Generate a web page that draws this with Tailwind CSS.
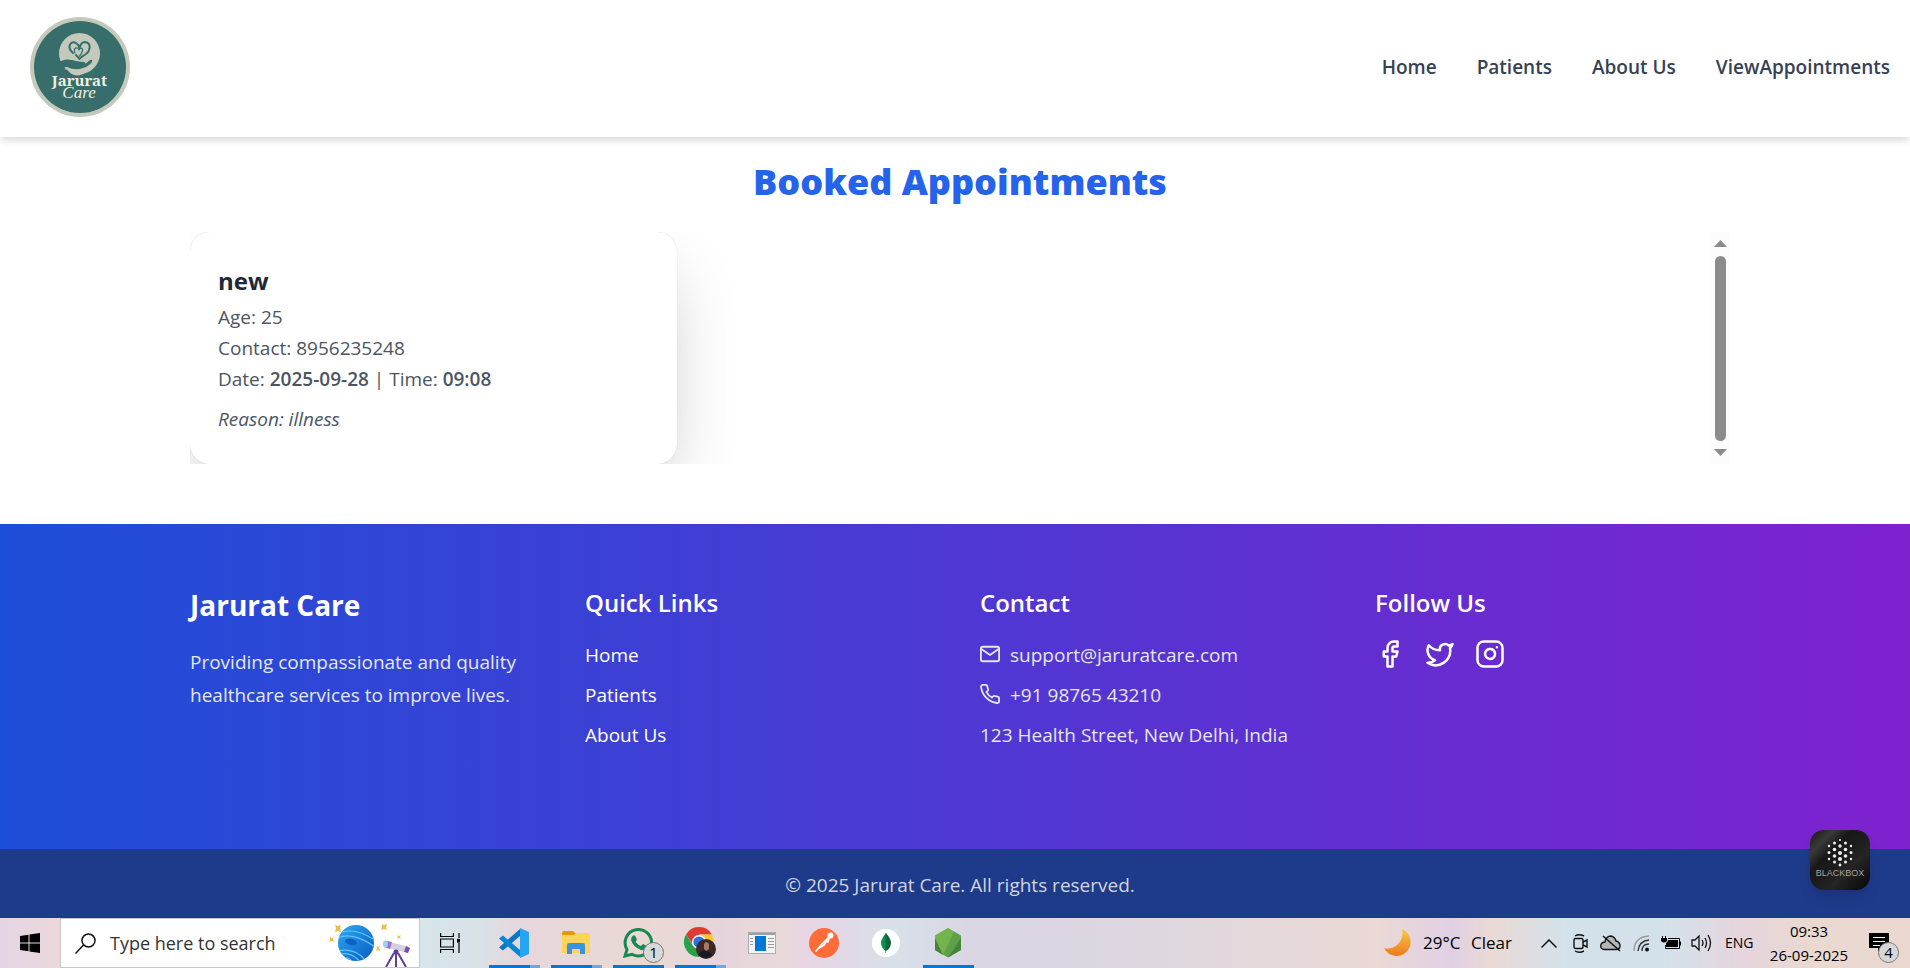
<!DOCTYPE html>
<html lang="en">
<head>
<meta charset="utf-8">
<title>Jarurat Care</title>
<script src="https://cdn.jsdelivr.net/npm/@tailwindcss/browser@4"></script>
</head>
<body class="min-h-screen flex flex-col bg-white font-['Segoe_UI','Open_Sans',sans-serif] text-[19px] leading-[30px] overflow-x-hidden">

<header class="relative z-10 h-[137px] shrink-0 flex items-center justify-between pl-[30px] pr-5 pb-[3px] bg-white shadow-[0_4px_8px_-1px_rgba(0,0,0,0.16)]">
  <a href="#" aria-label="Jarurat Care">
    <svg class="size-[100px]" viewBox="0 0 100 100">
      <circle cx="50" cy="50" r="50" fill="#c3cabb"/>
      <circle cx="50" cy="50" r="46" fill="#376e6b"/>
      <circle cx="49.500" cy="36.500" r="20.500" fill="#c3cabb"/>
      <g fill="none" stroke="#376e6b" stroke-linecap="round" stroke-linejoin="round">
        <path stroke-width="2" d="M43 36C36 30 41 23 46 26Q49 28 49.500 31Q51 25 55 25C62 26 60 34 56 37Q51 40 49.500 42Q48 40 46 38"/>
        <path stroke-width="1.200" d="M45 36C43 31 47 29 49 33Q51 30 52.500 32Q53 35 49.500 39"/>
      </g>
      <path fill="#376e6b" d="M28 46Q34 41 42 43Q49 45 54 45Q57 46 54 48L60 43Q63 42 62 45Q58 50 53 51Q45 54 37 50Q33 50 28 54Z"/>
      <path fill="#c3cabb" d="M34 52Q39 50 43 54Q49 57 58 53Q52 60 44 58Q39 56 38 53Z"/>
      <text x="49.500" y="69" text-anchor="middle" font-family="'Noto Serif','Liberation Serif',serif" font-weight="700" font-size="15" fill="#f1efdf">Jarurat</text>
      <text x="49" y="81" text-anchor="middle" font-family="'Liberation Serif',serif" font-style="italic" font-size="17" fill="#f1efdf">Care</text>
    </svg>
  </a>
  <nav class="flex gap-10 font-semibold text-gray-700">
    <a href="#">Home</a><a href="#">Patients</a><a href="#">About Us</a><a href="#">ViewAppointments</a>
  </nav>
</header>

<main class="shrink-0 pl-[10px] pb-[60px]">
  <div class="max-w-[1540px] mx-auto">
    <h1 class="pt-5 mb-[25px] text-center text-[36px] leading-[50px] font-extrabold text-[#2563eb]">Booked Appointments</h1>
    <section class="h-[232px] flex justify-between overflow-hidden" aria-label="Appointments">
      <article class="w-[487px] h-full rounded-[20px] bg-white px-7 pt-[31px] leading-[31px] text-[#4b5563] shadow-[0_31px_70px_-15px_rgba(0,0,0,0.25),0_0_1px_rgba(0,0,0,0.2)]">
        <h2 class="mb-[4px] text-[24px] leading-[35px] font-bold text-[#1f2937]">new</h2>
        <p>Age: 25</p>
        <p>Contact: 8956235248</p>
        <p>Date: <span class="font-semibold">2025-09-28</span> | Time: <span class="font-semibold">09:08</span></p>
        <p class="mt-[9px] italic">Reason: illness</p>
      </article>
      <div class="w-[19px] flex flex-col items-center justify-between py-2 bg-[#fcfcfc]" aria-hidden="true">
        <svg class="w-[13px] h-[7px]" viewBox="0 0 13 7"><path fill="#8b8b8b" d="M6.500 0L13 7H0Z"/></svg>
        <div class="w-[11px] h-[185px] rounded-full bg-[#8b8b8b]"></div>
        <svg class="w-[13px] h-[7px]" viewBox="0 0 13 7"><path fill="#8b8b8b" d="M0 0H13L6.500 7Z"/></svg>
      </div>
    </section>
  </div>
</main>

<footer class="relative flex-1 flex flex-col bg-linear-to-r/srgb from-[#1d4ed8] to-[#7e22ce] text-white">
  <div class="flex-1 pl-[10px] pt-[60px]">
    <div class="max-w-[1540px] mx-auto grid grid-cols-4 gap-10">
      <div>
        <h2 class="mb-5 text-[28px] leading-[42px] font-bold">Jarurat Care</h2>
        <p class="leading-[33px] text-[#e5e7eb]">Providing compassionate and quality healthcare services to improve lives.</p>
      </div>
      <div>
        <h3 class="mb-[18px] text-[24px] leading-[38px] font-semibold">Quick Links</h3>
        <ul class="flex flex-col gap-[10px]">
          <li><a href="#">Home</a></li><li><a href="#">Patients</a></li><li><a href="#">About Us</a></li>
        </ul>
      </div>
      <div>
        <h3 class="mb-[18px] text-[24px] leading-[38px] font-semibold">Contact</h3>
        <ul class="flex flex-col gap-[10px] text-[#e5e7eb]">
          <li class="flex items-center gap-[10px]">
            <svg class="size-5 mb-[2px]" viewBox="1 1 22 22" fill="none" stroke="currentColor" stroke-width="2" stroke-linecap="round" stroke-linejoin="round"><rect x="2" y="4" width="20" height="16" rx="2"/><path d="M2.500 6.500l9.500 6.500 9.500-6.500"/></svg>
            <a href="#">support@jaruratcare.com</a></li>
          <li class="flex items-center gap-[10px]">
            <svg class="size-5 mb-[2px]" viewBox="1 1 22 22" fill="none" stroke="currentColor" stroke-width="2" stroke-linecap="round" stroke-linejoin="round"><path d="M22 16.920v3a2 2 0 0 1-2.180 2 19.790 19.790 0 0 1-8.630-3.070 19.500 19.500 0 0 1-6-6 19.790 19.790 0 0 1-3.070-8.670A2 2 0 0 1 4.110 2h3a2 2 0 0 1 2 1.720 12.840 12.840 0 0 0 .7 2.810 2 2 0 0 1-.45 2.110L8.090 9.910a16 16 0 0 0 6 6l1.270-1.270a2 2 0 0 1 2.110-.45 12.840 12.840 0 0 0 2.810.7A2 2 0 0 1 22 16.920z"/></svg>
            <a href="#">+91 98765 43210</a></li>
          <li>123 Health Street, New Delhi, India</li>
        </ul>
      </div>
      <div>
        <h3 class="mb-[17px] text-[24px] leading-[38px] font-semibold">Follow Us</h3>
        <div class="flex gap-5">
          <a href="#" aria-label="Facebook"><svg class="size-[30px]" viewBox="0 0 24 24" fill="none" stroke="currentColor" stroke-width="2" stroke-linecap="round" stroke-linejoin="round"><path d="M18 2h-3a5 5 0 0 0-5 5v3H7v4h3v8h4v-8h3l1-4h-4V7a1 1 0 0 1 1-1h3z"/></svg></a>
          <a href="#" aria-label="Twitter"><svg class="size-[30px]" viewBox="0 0 24 24" fill="none" stroke="currentColor" stroke-width="2" stroke-linecap="round" stroke-linejoin="round"><path d="M22 4s-.7 2.100-2 3.400c1.600 10-9.400 17.300-18 11.600 2.200.1 4.400-.6 6-2C3 15.500.5 9.600 3 5c2.200 2.600 5.600 4.100 9 4-.9-4.200 4-6.600 7-3.800 1.100 0 3-1.200 3-1.200z"/></svg></a>
          <a href="#" aria-label="Instagram"><svg class="size-[30px]" viewBox="0 0 24 24" fill="none" stroke="currentColor" stroke-width="2" stroke-linecap="round" stroke-linejoin="round"><rect x="2" y="2" width="20" height="20" rx="5"/><path d="M16 11.370A4 4 0 1 1 12.630 8 4 4 0 0 1 16 11.370zM17.500 6.500h.01"/></svg></a>
        </div>
      </div>
    </div>
  </div>
  <p class="h-[69px] pl-[10px] flex items-center justify-center pt-[2px] bg-[#1e3a8a] text-[#d1d5db]">© 2025 Jarurat Care. All rights reserved.</p>
  <button aria-label="Blackbox" class="absolute right-10 bottom-[28px] size-[60px] rounded-[14px] shadow-lg">
    <svg class="size-[60px]" viewBox="0 0 60 60">
      <defs><linearGradient id="bb" x1="0" y1="0" x2="1" y2="1"><stop offset="0" stop-color="#151515"/><stop offset=".2" stop-color="#3a3a3a"/><stop offset=".35" stop-color="#181818"/><stop offset=".5" stop-color="#1c1c1c"/><stop offset=".65" stop-color="#252525"/><stop offset="1" stop-color="#050505"/></linearGradient></defs>
      <rect width="60" height="60" rx="14" fill="url(#bb)"/>
      <g fill="#eeeeee">
        <circle cx="30" cy="10" r="1"/><circle cx="30" cy="16" r="1.700"/><circle cx="30" cy="23" r="2"/><circle cx="30" cy="29" r="2"/><circle cx="30" cy="35" r="1.400"/>
        <circle cx="24.500" cy="13" r="1.500"/><circle cx="24.500" cy="19.500" r="1.800"/><circle cx="24.500" cy="26" r="1.800"/><circle cx="24.500" cy="32" r="1.500"/>
        <circle cx="35.500" cy="13" r="1.500"/><circle cx="35.500" cy="19.500" r="1.800"/><circle cx="35.500" cy="26" r="1.800"/><circle cx="35.500" cy="32" r="1.500"/>
        <circle cx="19" cy="16" r="1.200"/><circle cx="19" cy="22.500" r="1.500"/><circle cx="19" cy="29" r="1.200"/>
        <circle cx="41" cy="16" r="1.200"/><circle cx="41" cy="22.500" r="1.500"/><circle cx="41" cy="29" r="1.200"/>
      </g>
      <text x="30" y="46" text-anchor="middle" font-family="'Liberation Sans',sans-serif" font-size="9" fill="#a2a2a2">BLACKBOX</text>
    </svg>
  </button>
</footer>

<section aria-label="Taskbar" class="h-[50px] shrink-0 flex items-center text-black bg-[linear-gradient(90deg,#e5d5e3_0%,#ead8dc_3%,#d6e4eb_22%,#d8e3e8_25%,#e6d7de_27%,#ead9d3_34%,#e5d5dc_38%,#ead9d9_41%,#e8d5e4_42%,#d8e0e8_47%,#dad6e4_51%,#ded7e0_60%,#ead9d5_72%,#e1d0e4_76%,#ead9d5_78%,#d3e2ea_82%,#d3e2ea_87%,#e5d5de_91%,#ead9d0_95%,#ead8d0_100%)]">
  <button aria-label="Start" class="w-[60px] h-full grid place-items-center"><svg class="size-5" viewBox="0 0 20 20"><path d="M0 3L8.500 1.700V9.500H0ZM9.500 1.500L20 0V9.500H9.500ZM0 10.500H8.500V18.300L0 17ZM9.500 10.500H20V20L9.500 18.500Z"/></svg></button>
  <label class="w-[360px] h-[50px] shrink-0 flex items-center border border-[#c8c8c8] bg-white pl-[14px] pr-[8px]">
    <svg class="size-[21px] shrink-0" viewBox="0 0 21 21" fill="none" stroke="#111" stroke-width="1.500"><circle cx="13.500" cy="7.500" r="6.500"/><path d="M8.500 12L.5 20.500"/></svg>
    <input type="text" aria-label="Search" placeholder="Type here to search" class="ml-[14px] flex-1 min-w-0 text-[18px] placeholder:text-[#333] outline-none">
    <svg class="w-[84px] h-[48px] shrink-0" viewBox="0 0 84 48">
      <defs><linearGradient id="pl" x1="0" y1="0" x2="1" y2="1"><stop offset="0" stop-color="#2fa8f5"/><stop offset="1" stop-color="#0a5bc0"/></linearGradient><clipPath id="pc"><circle cx="29" cy="24" r="18"/></clipPath></defs>
      <circle cx="29" cy="24" r="18" fill="url(#pl)"/>
      <g clip-path="url(#pc)" fill="none" stroke="#5cc8fb" stroke-width="1.200"><path d="M12 14Q27 8 46 20M10 19Q26 12 48 28M11 32Q30 28 40 44M10 36Q24 31 34 44M14 40Q23 36 27 46"/></g>
      <ellipse cx="24" cy="23" rx="6" ry="3" fill="#0b62c4" transform="rotate(12 24 23)"/>
      <g fill="#eabf45"><path d="M8 6l3 1 3-1-1 3 1 4-3-1-3 1 1-4zM3 18l2 1 2-1-1 2 1 3-2-1-3 1 1-2zM55 5l2 1 3-1-1 3 1 3-3-1-3 1 1-3zM70 16l2 1 2-1-1 2 1 2-2-1-2 1 1-2zM49 27l2 1 2-1-1 2 1 3-2-1-2 1 1-3z"/></g>
      <path d="M69 34V48M67 34L59 48M71 34L79 48" stroke="#5b3f98" stroke-width="2"/>
      <path d="M59 22L82 28L81 34L57 28Z" fill="#d5cfe0"/><path d="M60 22L65 23L63 30L57 28Z" fill="#9876c8"/><path d="M79 27L83 29L81 34L77 33Z" fill="#7650b0"/><ellipse cx="58.500" cy="25" rx="2.500" ry="3.500" fill="#9ad0f5"/><circle cx="69" cy="33" r="2.500" fill="#5b3f98"/>
    </svg>
  </label>
  <button aria-label="Task view" class="w-[60px] h-full shrink-0 grid place-items-center"><svg class="size-5" viewBox="0 0 20 20" fill="none" stroke="#000" stroke-width="1.200"><path d="M.6 0V3.500H13.400V0M.6 20V16.500H13.400V20M.6 6H13.400V14H.6ZM19 0V5M19 10V20"/><rect x="17.600" y="6.500" width="2.500" height="2.500" fill="#000"/></svg></button>
  <div class="ml-[3px] flex h-full shrink-0">
    <button aria-label="Visual Studio Code" class="relative w-[62px] grid place-items-center"><svg class="size-[30px]" viewBox="0 0 30 30"><path fill="#0b76c4" d="M21 8L4 22.500 0 19.500 21 1Z"/><path fill="#0b86d3" d="M21 22L4 7.500 0 10.500 21 29Z"/><path fill="#26a6f2" d="M21 0L30 4V26L21 30Z"/></svg><span class="absolute left-[6px] bottom-0 w-[41px] h-[3px] bg-[#0078d7]"></span><span class="absolute left-[47px] bottom-0 w-[10px] h-[3px] bg-[#66abe3]"></span></button>
    <button aria-label="File Explorer" class="relative w-[62px] grid place-items-center"><svg class="w-7 h-6" viewBox="0 0 28 24"><path fill="#dd9d06" d="M0 2Q0 0 2 0H11L14 3V7H0Z"/><path fill="#fdd45a" d="M0 4H12L15 2H26Q28 2 28 4V22H0Z"/><path fill="#3a92dc" d="M5 23V14Q5 12 7 12H21Q23 12 23 14V23H18V18H10V23Z"/></svg><span class="absolute left-[6px] bottom-0 w-[41px] h-[3px] bg-[#0078d7]"></span><span class="absolute left-[47px] bottom-0 w-[10px] h-[3px] bg-[#66abe3]"></span></button>
    <button aria-label="WhatsApp, 1 unread" class="relative w-[62px] grid place-items-center"><svg class="size-[30px]" viewBox="0 0 30 30"><path fill="none" stroke="#178a52" stroke-width="3" d="M2 28L4 21.500A13.200 13.200 0 1 1 9 26.300Z"/><path fill="#178a52" d="M10 7.500h2l2 4-1.500 2.500Q15 17 18 18l2-2 4 2v2Q22 23 18 22 10 19 8 12 8 9 10 7.500Z"/></svg><span class="absolute left-[36px] top-[24px] size-[21px] rounded-full border border-[#777] bg-[#d8d8d8] text-[15px] leading-[19px] text-center">1</span><span class="absolute left-[6px] bottom-0 w-[51px] h-[3px] bg-[#0078d7]"></span></button>
    <button aria-label="Google Chrome" class="relative w-[62px] grid place-items-center"><svg class="w-8 h-[32px]" viewBox="0 0 32 32"><path fill="#de3b31" d="M2 7.500A15 15 0 0 1 28 7.500H15L9 18Z"/><path fill="#fcc82f" d="M28 7.500A15 15 0 0 1 15 30L21 18 15 7.500Z"/><path fill="#29a14b" d="M2 7.500A15 15 0 0 0 15 30L20 20 9 19Z"/><circle cx="15" cy="15" r="7" fill="#fff"/><circle cx="15" cy="15" r="5.600" fill="#2b72df"/><circle cx="22" cy="22" r="10" fill="#3a2925"/><path fill="#ad7565" d="M20 17q2-4 5 0v5l-3 2-2-2z"/><path fill="#171a20" d="M14 28q3-5 8-4t6 4q-6 6-14 0z"/></svg><span class="absolute left-[6px] bottom-0 w-[41px] h-[3px] bg-[#0078d7]"></span><span class="absolute left-[47px] bottom-0 w-[10px] h-[3px] bg-[#66abe3]"></span></button>
    <button aria-label="Application" class="w-[62px] grid place-items-center"><svg class="w-7 h-[22px]" viewBox="0 0 28 22"><rect x=".5" y=".5" width="27" height="21" fill="#f4f4f4" stroke="#a8adb2"/><path fill="#9aa0a6" d="M1 1H27V3H1Z"/><rect x="7" y="4" width="11" height="15" fill="#0078d7"/><path stroke="#999" d="M2 6.500H5M2 9.500H5M2 12.500H5M20 6.500H26M20 9.500H26M20 12.500H26M20 15.500H26"/></svg></button>
    <button aria-label="Postman" class="w-[62px] grid place-items-center"><svg class="size-[30px]" viewBox="0 0 30 30"><circle cx="15" cy="15" r="15" fill="#ff6c37"/><circle cx="21.500" cy="7.500" r="3" fill="#fff"/><path d="M19 10L13 16 7 23M19 11L15 17 10 20M20 10L19 14" fill="none" stroke="#fff" stroke-width="1.700" stroke-linecap="round"/></svg></button>
    <button aria-label="MongoDB Compass" class="w-[62px] grid place-items-center"><svg class="size-7" viewBox="0 0 28 28"><circle cx="14" cy="14" r="14" fill="#fff"/><path fill="#0a9152" d="M14 4Q9 10 9 14 9 19 14 22Z"/><path fill="#07663d" d="M14 4Q19 10 19 14 19 19 14 22V24H13.500V4Z"/></svg></button>
    <button aria-label="Node.js" class="relative w-[62px] grid place-items-center"><svg class="w-[26px] h-[30px]" viewBox="0 0 26 30"><path fill="#5fa04a" d="M13 0L26 7.500V22L13 29.500 0 22V7.500Z"/><path fill="#7cbd4d" d="M0 7.500L13 0 19 4 8 27 0 22Z" opacity=".7"/><path fill="#45853a" d="M0 10L8 27 0 22ZM26 10L13 29.500 26 22Z"/></svg><span class="absolute left-[6px] bottom-0 w-[51px] h-[3px] bg-[#0078d7]"></span></button>
  </div>
  <div class="ml-auto flex h-full items-center shrink-0">
    <svg class="size-7 mr-[11px]" viewBox="0 0 28 28"><defs><linearGradient id="mo" x1="0" y1="0" x2="0" y2="1"><stop offset="0" stop-color="#f7c84a"/><stop offset="1" stop-color="#ef7a1c"/></linearGradient></defs><path fill="url(#mo)" d="M18 0A14 14 0 1 1 0 19Q8 21 14 15T18 0Z"/></svg>
    <span class="w-[48px] text-[17px] whitespace-nowrap">29°C</span><span class="w-[56px] text-[17px]">Clear</span>
    <svg class="ml-[14px] w-4 h-[9px]" viewBox="0 0 16 9" fill="none" stroke="#111" stroke-width="1.500"><path d="M.5 8.500L8 1L15.500 8.500"/></svg>
    <svg class="ml-4 w-[15px] h-[19px]" viewBox="0 0 15 19" fill="none" stroke="#111" stroke-width="1.400"><rect x="1" y="4.500" width="9" height="10" rx="1.500"/><path d="M10 8L14 6V13L10 11M2 2Q6-.5 11 2M2 17Q6 19.500 11 17"/></svg>
    <svg class="ml-3 w-[21px] h-[17px]" viewBox="0 0 21 17"><path fill="#b5b5b5" stroke="#111" stroke-width="1.400" d="M4 14.500Q0 14 1 9.500 2 7 5 7 6 1 11 1 15 2 16 6 20 7 20 11 20 14.500 16 14.500Z"/><path stroke="#111" stroke-width="1.500" d="M3 1L20 16"/></svg>
    <svg class="ml-3 w-[17px] h-[17px]" viewBox="0 0 17 17" fill="none" stroke-width="1.400"><path stroke="#999" d="M1 16Q1 2 16 1"/><path stroke="#333" d="M5 16Q6 6 16 5M9 16Q9 9 16 9"/><circle cx="14" cy="14.500" r="2" fill="#111"/></svg>
    <svg class="ml-[11px] w-5 h-[14px]" viewBox="0 0 20 14"><path d="M7 4H17V11H5V7Q7 6 7 4Z"/><path d="M7 2.500H18.500V12.500H4.500V9M19.500 5.500V9.500M1.500 0V2M4.500 0V2" fill="none" stroke="#000"/><path d="M0 2H6V5Q3 8 0 5Z"/></svg>
    <svg class="ml-[10px] w-[21px] h-[18px]" viewBox="0 0 21 18" fill="none" stroke="#111" stroke-width="1.300"><path d="M1 6H4L8 2V16L4 12H1ZM11 6Q13 9 11 12M14 4Q17 9 14 14M17 1Q22 9 17 17"/></svg>
    <span class="ml-[13px] w-[30px] text-[14px]">ENG</span>
    <div class="ml-[14px] w-[80px] text-center text-[15px] leading-[24px] whitespace-nowrap"><div>09:33</div><div>26-09-2025</div></div>
    <button aria-label="Notifications, 4 new" class="relative ml-[20px] mr-[9px] w-[32px] h-full"><svg class="absolute left-0 top-[15px] w-5 h-[19px]" viewBox="0 0 20 19"><path d="M0 0H20V15H13L9 19V15H0Z"/><path stroke="#fff" stroke-width="1.200" d="M4 4.500H16M4 8.500H16M4 12.500H11"/></svg><span class="absolute left-[9px] top-[24px] size-[21px] rounded-full border border-[#777] bg-[#d8d8d8] text-[15px] leading-[19px] text-center">4</span></button>
  </div>
</section>
</body>
</html>
